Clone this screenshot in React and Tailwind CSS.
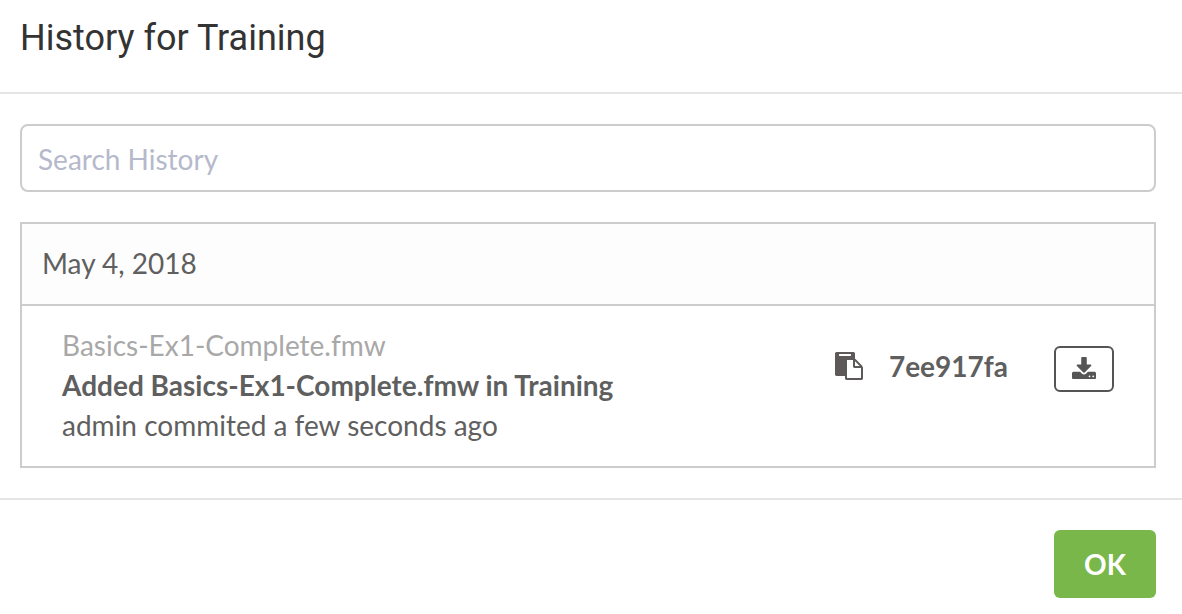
function PasteIcon() {
  return (
    <svg viewBox="0 0 1792 1792" className="size-7" fill="currentColor" aria-hidden="true">
      <path d="M768 1664h896v-640h-416q-40 0-68-28t-28-68v-416h-384v1152zm256-1440v-64q0-13-9.500-22.500t-22.500-9.500h-704q-13 0-22.500 9.500t-9.500 22.500v64q0 13 9.500 22.500t22.500 9.500h704q13 0 22.500-9.500t9.500-22.500zm256 672h299l-299-299v299zm512 128v672q0 40-28 68t-68 28h-960q-40 0-68-28t-28-68v-160h-544q-40 0-68-28t-28-68v-1344q0-40 28-68t68-28h1088q40 0 68 28t28 68v328q21 13 36 28l408 408q28 28 48 76t20 88z" />
    </svg>
  );
}

function DownloadIcon() {
  return (
    <svg viewBox="0 0 1664 1536" className="w-6" fill="currentColor" aria-hidden="true">
      <path d="M1280 1344q0-26-19-45t-45-19-45 19-19 45 19 45 45 19 45-19 19-45zm256 0q0-26-19-45t-45-19-45 19-19 45 19 45 45 19 45-19 19-45zm128-224v320q0 40-28 68t-68 28h-1472q-40 0-68-28t-28-68v-320q0-40 28-68t68-28h465l135 136q58 56 136 56t136-56l136-136h464q40 0 68 28t28 68zm-325-569q17 41-14 70l-448 448q-18 19-45 19t-45-19l-448-448q-31-29-14-70 17-39 59-39h256v-448q0-26 19-45t45-19h256q26 0 45 19t19 45v448h256q42 0 59 39z" />
    </svg>
  );
}

export default function App() {
  return (
    <main className="min-h-screen bg-white font-['Lato',sans-serif] text-[28px] leading-[40px] text-[#5f5f5f]">
      <header className="border-b-2 border-[#e5e5e5] px-5 pt-4 pb-8">
        <h1 className="font-['Roboto',sans-serif] text-[36px] leading-[44px] text-[#333333]">History for Training</h1>
      </header>
      <section className="border-b-2 border-[#e5e5e5] py-[30px] pr-[26px] pl-5">
        <input type="search" aria-label="Search History" placeholder="Search History" className="block h-[68px] w-full rounded-lg border-2 border-[#cccccc] bg-white px-4 pt-0.5 outline-none placeholder:text-[#b5b9cb]" />
        <div className="mt-[30px] border-2 border-[#cccccc]">
          <h2 className="border-b-2 border-[#cccccc] bg-[#fdfdfd] px-5 pt-[19px] pb-[21px]">May 4, 2018</h2>
          <article className="flex items-start justify-between px-10 pt-[19px] pb-[21px]">
            <div>
              <p className="text-[#a8a8a8]">Basics-Ex1-Complete.fmw</p>
              <p className="font-bold">Added Basics-Ex1-Complete.fmw in Training</p>
              <p>admin commited a few seconds ago</p>
            </div>
            <div className="flex items-start pt-[21px]">
              <button aria-label="Copy commit ID" className="flex h-10 items-center text-[#5d5959]"><PasteIcon /></button>
              <span className="ml-[26px] font-bold">7ee917fa</span>
              <button aria-label="Download" className="ml-[46px] flex h-[46px] w-[60px] items-center justify-center rounded-md border-2 border-[#555555] pb-0.5 text-[#555555]"><DownloadIcon /></button>
            </div>
          </article>
        </div>
      </section>
      <footer className="flex justify-end pt-[30px] pr-[26px] pb-4">
        <button className="h-[68px] w-[102px] rounded-md bg-[#79b74a] font-bold text-white">OK</button>
      </footer>
    </main>
  );
}
